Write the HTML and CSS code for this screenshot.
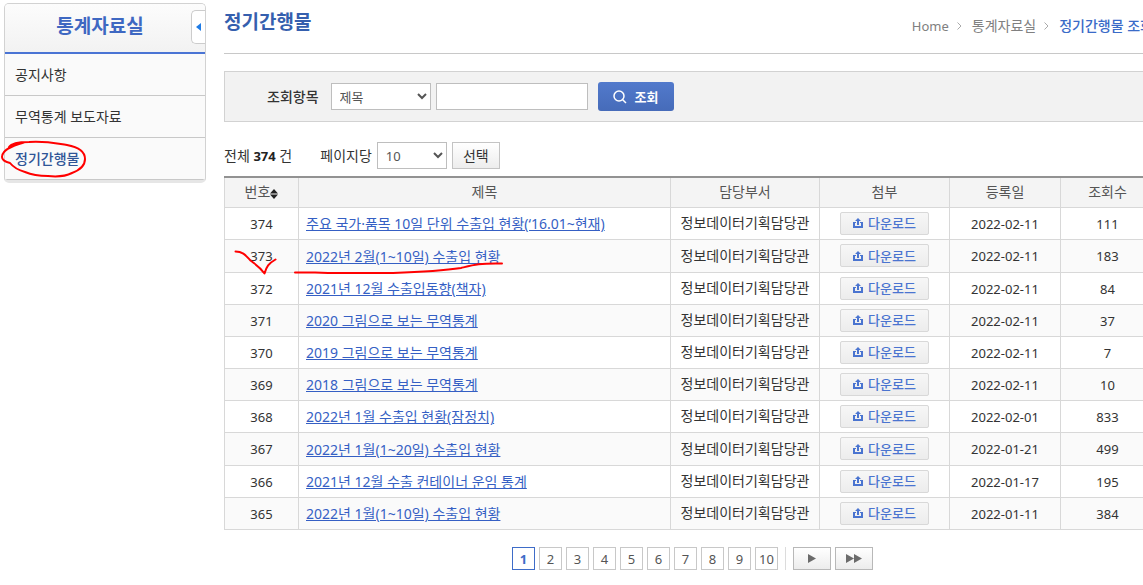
FILE: index.html
```html
<!DOCTYPE html>
<html lang="ko">
<head>
<meta charset="utf-8">
<meta name="viewport" content="width=device-width, initial-scale=1">
<title>정기간행물</title>
<link rel="stylesheet" href="styles.css">
</head>
<body>
<svg class="sprite" aria-hidden="true">
  <symbol id="icon-download" viewBox="0 0 10 10">
    <path d="M0 4h3v1H2v3h6V5H7V4h3v6H0z" fill="currentColor"/>
    <path d="M5 0l3 3H6v4H4V3H2z" fill="currentColor"/>
  </symbol>
</svg>
<div class="page">
  <aside class="sidebar">
    <div class="sidebar-head">
      <h2 class="sidebar-title">통계자료실</h2>
      <button class="sidebar-toggle" type="button" aria-label="메뉴 닫기"><svg width="5" height="8" viewBox="0 0 5 8"><path d="M5 0v8L0 4z" fill="#1e7be6"/></svg></button>
    </div>
    <nav class="menu">
      <a class="menu-item" href="#">공지사항</a>
      <a class="menu-item" href="#">무역통계 보도자료</a>
      <a class="menu-item current" href="#">정기간행물</a>
    </nav>
  </aside>

  <main class="content">
    <header class="content-head">
      <h1 class="title">정기간행물</h1>
      <nav class="crumbs">
        <a class="home" href="#">Home</a>
        <svg class="crumb-sep" width="5" height="8" viewBox="0 0 5 8"><path d="M.5.5L4 4 .5 7.500" fill="none" stroke="#aaa"/></svg>
        <a href="#">통계자료실</a>
        <svg class="crumb-sep" width="5" height="8" viewBox="0 0 5 8"><path d="M.5.5L4 4 .5 7.500" fill="none" stroke="#aaa"/></svg>
        <a class="here" href="#">정기간행물 조회</a>
      </nav>
    </header>

    <form class="search">
      <label class="search-label" for="field">조회항목</label>
      <select class="control field" id="field"><option>제목</option></select>
      <input class="control keyword" type="text" aria-label="검색어">
      <button class="search-button" type="button"><svg width="14" height="14" viewBox="0 0 14 14" fill="none" stroke="#fff" stroke-width="1.500"><circle cx="6" cy="6" r="5"/><path d="M9.500 9.500l3.500 3.500"/></svg>조회</button>
    </form>

    <div class="list-bar">
      <span class="total">전체 <strong>374</strong> 건</span>
      <label for="size">페이지당</label>
      <select class="control size" id="size"><option>10</option></select>
      <button class="pick" type="button">선택</button>
    </div>

    <table class="list">
      <colgroup><col class="c-no"><col><col class="c-dept"><col class="c-file"><col class="c-date"><col class="c-hits"></colgroup>
      <thead>
        <tr><th>번호<svg class="sort" width="8" height="10" viewBox="0 0 8 10"><path d="M4 0l4 4.500H0zM0 5.500h8L4 10z" fill="#222"/></svg></th><th>제목</th><th>담당부서</th><th>첨부</th><th>등록일</th><th>조회수</th></tr>
      </thead>
      <tbody>
        <tr><td class="num">374</td><td class="subject"><a href="#">주요 국가·품목 10일 단위 수출입 현황(‘16.01~현재)</a></td><td>정보데이터기획담당관</td><td><button class="download" type="button"><svg width="10" height="10"><use href="#icon-download"/></svg>다운로드</button></td><td class="num">2022-02-11</td><td class="num">111</td></tr>
        <tr><td class="num">373</td><td class="subject"><a href="#">2022년 2월(1~10일) 수출입 현황</a></td><td>정보데이터기획담당관</td><td><button class="download" type="button"><svg width="10" height="10"><use href="#icon-download"/></svg>다운로드</button></td><td class="num">2022-02-11</td><td class="num">183</td></tr>
        <tr><td class="num">372</td><td class="subject"><a href="#">2021년 12월 수출입동향(책자)</a></td><td>정보데이터기획담당관</td><td><button class="download" type="button"><svg width="10" height="10"><use href="#icon-download"/></svg>다운로드</button></td><td class="num">2022-02-11</td><td class="num">84</td></tr>
        <tr><td class="num">371</td><td class="subject"><a href="#">2020 그림으로 보는 무역통계</a></td><td>정보데이터기획담당관</td><td><button class="download" type="button"><svg width="10" height="10"><use href="#icon-download"/></svg>다운로드</button></td><td class="num">2022-02-11</td><td class="num">37</td></tr>
        <tr><td class="num">370</td><td class="subject"><a href="#">2019 그림으로 보는 무역통계</a></td><td>정보데이터기획담당관</td><td><button class="download" type="button"><svg width="10" height="10"><use href="#icon-download"/></svg>다운로드</button></td><td class="num">2022-02-11</td><td class="num">7</td></tr>
        <tr><td class="num">369</td><td class="subject"><a href="#">2018 그림으로 보는 무역통계</a></td><td>정보데이터기획담당관</td><td><button class="download" type="button"><svg width="10" height="10"><use href="#icon-download"/></svg>다운로드</button></td><td class="num">2022-02-11</td><td class="num">10</td></tr>
        <tr><td class="num">368</td><td class="subject"><a href="#">2022년 1월 수출입 현황(잠정치)</a></td><td>정보데이터기획담당관</td><td><button class="download" type="button"><svg width="10" height="10"><use href="#icon-download"/></svg>다운로드</button></td><td class="num">2022-02-01</td><td class="num">833</td></tr>
        <tr><td class="num">367</td><td class="subject"><a href="#">2022년 1월(1~20일) 수출입 현황</a></td><td>정보데이터기획담당관</td><td><button class="download" type="button"><svg width="10" height="10"><use href="#icon-download"/></svg>다운로드</button></td><td class="num">2022-01-21</td><td class="num">499</td></tr>
        <tr><td class="num">366</td><td class="subject"><a href="#">2021년 12월 수출 컨테이너 운임 통계</a></td><td>정보데이터기획담당관</td><td><button class="download" type="button"><svg width="10" height="10"><use href="#icon-download"/></svg>다운로드</button></td><td class="num">2022-01-17</td><td class="num">195</td></tr>
        <tr><td class="num">365</td><td class="subject"><a href="#">2022년 1월(1~10일) 수출입 현황</a></td><td>정보데이터기획담당관</td><td><button class="download" type="button"><svg width="10" height="10"><use href="#icon-download"/></svg>다운로드</button></td><td class="num">2022-01-11</td><td class="num">384</td></tr>
      </tbody>
    </table>

    <nav class="pager" aria-label="페이지">
      <a class="page-link on" href="#">1</a>
      <a class="page-link" href="#">2</a>
      <a class="page-link" href="#">3</a>
      <a class="page-link" href="#">4</a>
      <a class="page-link" href="#">5</a>
      <a class="page-link" href="#">6</a>
      <a class="page-link" href="#">7</a>
      <a class="page-link" href="#">8</a>
      <a class="page-link" href="#">9</a>
      <a class="page-link" href="#">10</a>
      <span class="pager-rule"></span>
      <button class="pager-step" type="button" aria-label="다음"><svg width="8" height="9" viewBox="0 0 8 9"><path d="M0 0l8 4.500L0 9z" fill="#6b6b6b"/></svg></button>
      <button class="pager-step" type="button" aria-label="마지막"><svg width="16" height="9" viewBox="0 0 16 9"><path d="M0 0l8 4.500L0 9zM8 0l8 4.500L8 9z" fill="#6b6b6b"/></svg></button>
    </nav>
  </main>

  <svg class="marks" width="520" height="290" viewBox="0 0 520 290" fill="none" stroke="#f00" stroke-width="2" stroke-linecap="round" stroke-linejoin="round" aria-hidden="true">
    <path d="M24 142.500C15 145 2 149 2 157c0 3 4 5 8 6 4 5 8 7 15 9 7 3 13 4 23 4 9 1 18 0 24-3 8-3 13-7 13-14 0-8-7-12-18-14-13-2-20-4-38-3-10 0-18 2-20 5"/>
    <path d="M235.500 251.500c8 0 11 5 15 9 5 4 9 6 14 13 2-7 4-10 11-14"/>
    <path d="M295 272.500h20l13 .5h65c28-1 48-2 68-5 12-3 18-5 41-4.500"/>
  </svg>
</div>
</body>
</html>
```

FILE: styles.css
```css
* {
  box-sizing: border-box;
}

body {
  margin: 0;
  overflow-x: hidden;
  background: #fff;
  color: #333;
  font: 14px/20px "Noto Sans", "Noto Sans CJK KR", sans-serif;
}

button,
input,
select {
  margin: 0;
  font: inherit;
}

a {
  color: inherit;
  text-decoration: none;
}

.sprite {
  display: none;
}

/* The content column runs slightly past the right edge of the window. */
.page {
  position: relative;
  display: flex;
  align-items: flex-start;
  gap: 18px;
  margin-right: -12px;
  padding: 3px 0 0 4px;
}

/* Sidebar */
.sidebar {
  flex: 0 0 202px;
  overflow: hidden;
  border: 1px solid #d2d2d2;
  border-bottom: 3px solid #e6e6e6;
  border-radius: 5px;
  background: #fafafa;
}

.sidebar-head {
  position: relative;
  padding: 8px 10px 12px 0;
  border-bottom: 2px solid #4a74d4;
  background: linear-gradient(#fcfcfc, #f2f2f2);
}

.sidebar-title {
  margin: 0;
  color: #3e68c2;
  font-size: 19px;
  line-height: 28px;
  text-align: center;
}

.sidebar-toggle {
  position: absolute;
  top: 6px;
  right: 0;
  display: flex;
  align-items: center;
  justify-content: center;
  width: 14px;
  height: 34px;
  padding: 0;
  border: 1px solid #ccc;
  border-right: 0;
  border-radius: 5px 0 0 5px;
  background: #fff;
}

.menu-item {
  display: block;
  padding: 11px 10px 10px;
  border-bottom: 1px solid #c8c8c8;
}

.menu-item.current {
  color: #2f5597;
  font-weight: 500;
}

/* Content */
.content {
  flex: 1;
  min-width: 0;
}

.content-head {
  display: flex;
  justify-content: space-between;
  padding: 5px 0 17px;
  border-bottom: 1px solid #c8c8c8;
}

.title {
  margin: 0;
  color: #355fae;
  font-size: 19px;
  line-height: 28px;
}

.crumbs {
  display: flex;
  align-items: center;
  padding: 8px 2px 0 0;
  color: #808080;
}

.crumbs a {
  white-space: nowrap;
}

.crumbs .home {
  font-size: 13px;
}

.crumbs .here {
  color: #3a6bc8;
  font-weight: 500;
}

.crumb-sep {
  margin: 0 10px 0 8px;
}

.search {
  display: flex;
  align-items: center;
  margin-top: 17px;
  padding: 10px 42px;
  border: 1px solid #d2d2d2;
  background: #f2f2f2;
}

.search-label {
  margin-right: 12px;
  font-weight: 500;
}

.control {
  height: 27px;
  border: 1px solid #bebebe;
  border-radius: 0;
  background: #fff;
  color: #555;
  font-size: 13px;
}

.field {
  width: 100px;
  margin-right: 5px;
  padding-left: 4px;
}

.keyword {
  width: 152px;
  margin-right: 10px;
  padding: 0 6px;
}

.search-button {
  display: flex;
  align-items: center;
  justify-content: center;
  gap: 8px;
  width: 76px;
  height: 29px;
  padding: 0;
  border: 0;
  border-radius: 3px;
  background: linear-gradient(#527acc, #466bb9);
  color: #fff;
  font-size: 13px;
  font-weight: 700;
}

.list-bar {
  display: flex;
  align-items: center;
  gap: 5px;
  margin: 20px 0 7px;
}

.total {
  margin-right: 23px;
}

.total strong {
  color: #222;
  font-size: 13px;
}

.size {
  width: 70px;
  padding-left: 4px;
}

.pick {
  width: 48px;
  height: 27px;
  padding: 0;
  border: 1px solid #c4c4c4;
  background: linear-gradient(#fff, #ededed);
  color: #333;
}

/* List table */
.list {
  width: 100%;
  border-collapse: collapse;
  border-top: 2px solid #929292;
  table-layout: fixed;
}

.c-no {
  width: 74px;
}

.c-dept {
  width: 149px;
}

.c-file {
  width: 130px;
}

.c-date {
  width: 111px;
}

.c-hits {
  width: 94px;
}

.list th,
.list td {
  height: 32px;
  padding: 0;
  border: 1px solid #d8d8d8;
  text-align: center;
  white-space: nowrap;
}

.list th {
  height: 30px;
  border-top: 0;
  background: #f4f4f4;
  color: #555;
  font-weight: 400;
}

.list tbody tr:nth-child(6n + 2) td {
  height: 33px;
}

.list tbody tr:nth-child(even) {
  background: #fafafa;
}

.list .num {
  padding-top: 1px;
  font-size: 13px;
}

.list .subject {
  padding: 2px 0 0 7px;
  text-align: left;
}

.subject a {
  color: #355fc4;
  text-decoration: underline;
}

.sort {
  vertical-align: -2px;
}

.download {
  display: inline-flex;
  align-items: center;
  justify-content: center;
  gap: 5px;
  width: 89px;
  height: 23px;
  padding: 0;
  border: 1px solid #d8d8d8;
  border-radius: 2px;
  background: linear-gradient(#f7f7f7, #ececec);
  color: #4a74d0;
  font-size: 13px;
  font-weight: 500;
  vertical-align: middle;
}

/* Pager */
.pager {
  display: flex;
  justify-content: center;
  gap: 4px;
  margin-top: 17px;
  padding-left: 6px;
}

.page-link {
  width: 23px;
  height: 23px;
  border: 1px solid #c8c8c8;
  color: #555;
  font-size: 13px;
  line-height: 22px;
  text-align: center;
}

.page-link.on {
  border-color: #3e6cc8;
  color: #3e6cc8;
  font-weight: 700;
}

.pager-rule {
  width: 1px;
  margin: 0 3px;
  background: #dcdcdc;
}

.pager-step {
  display: flex;
  align-items: center;
  justify-content: center;
  width: 38px;
  height: 23px;
  padding: 0;
  border: 1px solid #b8b8b8;
  background: linear-gradient(#fff, #ececec);
}

/* Hand-drawn highlights over the page */
.marks {
  position: absolute;
  top: 0;
  left: 0;
  pointer-events: none;
}
```
